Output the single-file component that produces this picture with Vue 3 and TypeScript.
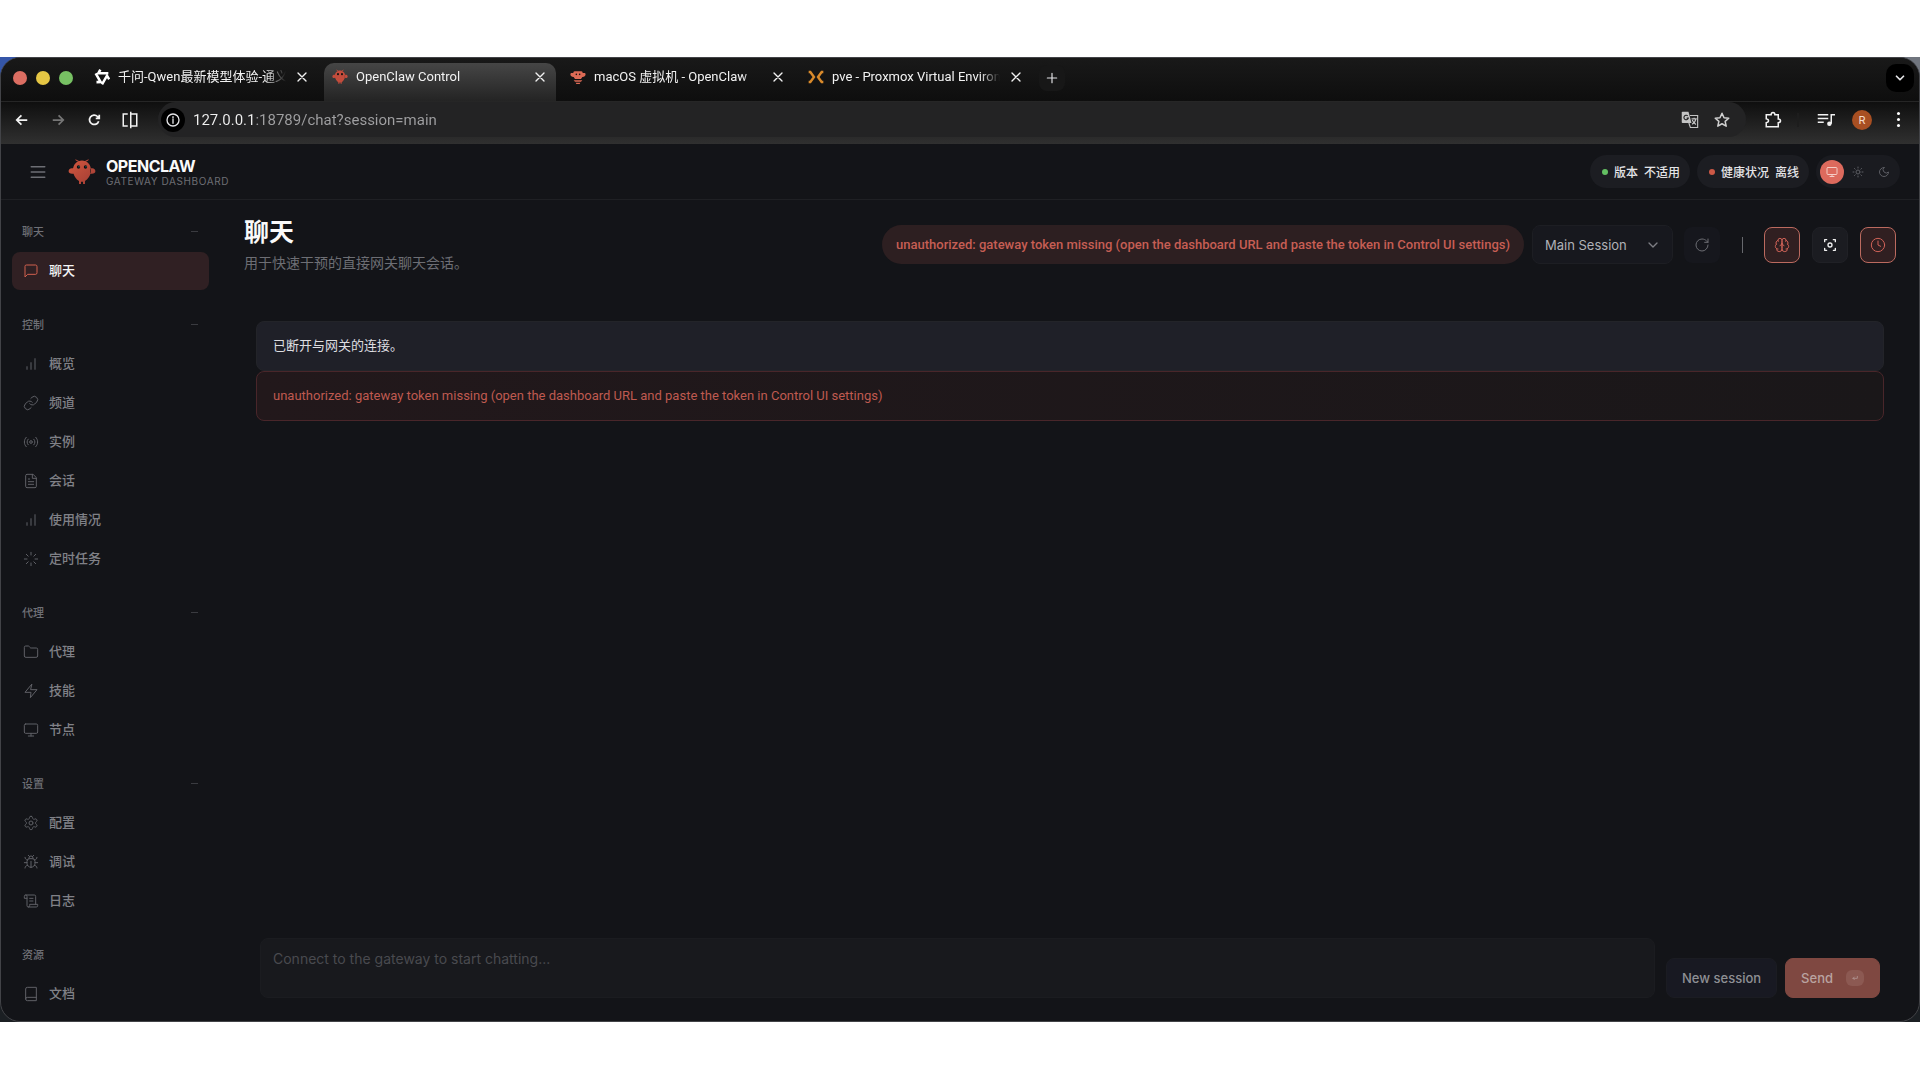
<script setup lang="ts">
import { ref } from 'vue'

interface NavItem {
  label: string
  icon: string
  active?: boolean
}
interface NavGroup {
  title: string
  collapsible: boolean
  items: NavItem[]
}

const icons: Record<string, string> = {
  message: 'M21 15a2 2 0 0 1-2 2H7l-4 4V5a2 2 0 0 1 2-2h14a2 2 0 0 1 2 2z',
  bars: 'M12 20V10M18 20V4M6 20v-4',
  link: 'M10 13a5 5 0 0 0 7.54.54l3-3a5 5 0 0 0-7.07-7.07l-1.72 1.71M14 11a5 5 0 0 0-7.54-.54l-3 3a5 5 0 0 0 7.07 7.07l1.71-1.71',
  radio:
    'M4.9 19.1C1 15.2 1 8.8 4.9 4.9M7.8 16.2c-2.3-2.3-2.3-6.1 0-8.5M14 12a2 2 0 1 1-4 0a2 2 0 1 1 4 0M16.2 7.8c2.3 2.3 2.3 6.1 0 8.5M19.1 4.9C23 8.8 23 15.1 19.1 19',
  file: 'M14.5 2H6a2 2 0 0 0-2 2v16a2 2 0 0 0 2 2h12a2 2 0 0 0 2-2V7.5zM14 2v6h6M16 13H8M16 17H8M10 9H8',
  loader:
    'M12 2v4M12 18v4M4.93 4.93l2.83 2.83M16.24 16.24l2.83 2.83M2 12h4M18 12h4M4.93 19.07l2.83-2.83M16.24 7.76l2.83-2.83',
  folder:
    'M20 20a2 2 0 0 0 2-2V8a2 2 0 0 0-2-2h-7.9a2 2 0 0 1-1.69-.9L9.6 3.9A2 2 0 0 0 7.93 3H4a2 2 0 0 0-2 2v13a2 2 0 0 0 2 2z',
  zap: 'M13 2L3 14h9l-1 8l10-12h-9z',
  monitor: 'M4 3h16a2 2 0 0 1 2 2v10a2 2 0 0 1-2 2H4a2 2 0 0 1-2-2V5a2 2 0 0 1 2-2zM8 21h8M12 17v4',
  settings:
    'M12.22 2h-.44a2 2 0 0 0-2 2v.18a2 2 0 0 1-1 1.73l-.43.25a2 2 0 0 1-2 0l-.15-.08a2 2 0 0 0-2.73.73l-.22.38a2 2 0 0 0 .73 2.73l.15.1a2 2 0 0 1 1 1.72v.51a2 2 0 0 1-1 1.74l-.15.09a2 2 0 0 0-.73 2.73l.22.38a2 2 0 0 0 2.73.73l.15-.08a2 2 0 0 1 2 0l.43.25a2 2 0 0 1 1 1.73V20a2 2 0 0 0 2 2h.44a2 2 0 0 0 2-2v-.18a2 2 0 0 1 1-1.73l.43-.25a2 2 0 0 1 2 0l.15.08a2 2 0 0 0 2.73-.73l.22-.39a2 2 0 0 0-.73-2.73l-.15-.08a2 2 0 0 1-1-1.74v-.5a2 2 0 0 1 1-1.74l.15-.09a2 2 0 0 0 .73-2.73l-.22-.38a2 2 0 0 0-2.73-.73l-.15.08a2 2 0 0 1-2 0l-.43-.25a2 2 0 0 1-1-1.73V4a2 2 0 0 0-2-2zM15 12a3 3 0 1 1-6 0a3 3 0 1 1 6 0',
  bug: 'M8 2l1.88 1.88M14.12 3.88L16 2M9 7.13v-1a3.003 3.003 0 1 1 6 0v1M12 20c-3.3 0-6-2.7-6-6v-3a4 4 0 0 1 4-4h4a4 4 0 0 1 4 4v3c0 3.3-2.7 6-6 6M12 20v-9M6.53 9C4.6 8.8 3 7.1 3 5M6 13H2M3 21c0-2.1 1.7-3.9 3.8-4M20.97 5c0 2.1-1.6 3.8-3.5 4M22 13h-4M17.2 17c2.1.1 3.8 1.9 3.8 4',
  scroll:
    'M8 21h12a2 2 0 0 0 2-2v-2H10v2a2 2 0 1 1-4 0V5a2 2 0 1 0-4 0v3h4M19 17V5a2 2 0 0 0-2-2H4M15 8h-5M15 12h-5',
  book: 'M4 19.5v-15A2.5 2.5 0 0 1 6.5 2H20v20H6.5a2.5 2.5 0 0 1 0-5H20',
  menu: 'M3 12h18M3 5h18M3 19h18',
  sun: 'M16 12a4 4 0 1 1-8 0a4 4 0 1 1 8 0M12 2v2M12 20v2M4.93 4.93l1.41 1.41M17.66 17.66l1.41 1.41M2 12h2M20 12h2M6.34 17.66l-1.41 1.41M19.07 4.93l-1.41 1.41',
  moon: 'M12 3a6 6 0 0 0 9 9a9 9 0 1 1-9-9z',
  refresh: 'M21 12a9 9 0 1 1-9-9c2.52 0 4.93 1 6.74 2.74L21 8M21 3v5h-5',
  brain:
    'M12 5a3 3 0 1 0-5.997.125a4 4 0 0 0-2.526 5.77a4 4 0 0 0 .556 6.588A4 4 0 1 0 12 18zM12 5a3 3 0 1 1 5.997.125a4 4 0 0 1 2.526 5.77a4 4 0 0 1-.556 6.588A4 4 0 1 1 12 18zM15 13a4.5 4.5 0 0 1-3-4a4.5 4.5 0 0 1-3 4M17.6 6.5a3 3 0 0 0 .4-1.375M6 5.125a3 3 0 0 0 .4 1.375M3.48 10.9a4 4 0 0 1 .58-.4M19.94 10.5a4 4 0 0 1 .58.4M6 18a4 4 0 0 1-1.97-.52M19.97 17.48A4 4 0 0 1 18 18',
  focus: 'M4 7V4h3M17 4h3v3M20 17v3h-3M7 20H4v-3M15 12a3 3 0 1 1-6 0a3 3 0 1 1 6 0',
  clock: 'M22 12a10 10 0 1 1-20 0a10 10 0 1 1 20 0M12 6v6l4 2',
  close: 'M6 6l12 12M18 6L6 18',
  plus: 'M12 4v16M4 12h16',
  down: 'M6 9l6 6l6-6',
  enter: 'M19 7v6H6M10 9l-4 4l4 4',
  back: 'M21 12H4M11 4l-8 8l8 8',
  forward: 'M3 12h17M13 4l8 8l-8 8',
  crab: 'M14 1.500C9 1.500 5 5.500 5 11C5 16.500 8.500 20.500 11 22v3h2v-2.300h2V25h2v-3C19.500 20.500 23 16.500 23 11C23 5.500 19 1.500 14 1.500zM5.500 9.500C3 8.500 .8 9.800 .6 12C.5 14.200 3 15.300 5.800 14.500zM22.500 9.500C25 8.500 27.200 9.800 27.400 12C27.500 14.200 25 15.300 22.200 14.500z',
}

const groups: NavGroup[] = [
  { title: '聊天', collapsible: true, items: [{ label: '聊天', icon: 'message', active: true }] },
  {
    title: '控制',
    collapsible: true,
    items: [
      { label: '概览', icon: 'bars' },
      { label: '频道', icon: 'link' },
      { label: '实例', icon: 'radio' },
      { label: '会话', icon: 'file' },
      { label: '使用情况', icon: 'bars' },
      { label: '定时任务', icon: 'loader' },
    ],
  },
  {
    title: '代理',
    collapsible: true,
    items: [
      { label: '代理', icon: 'folder' },
      { label: '技能', icon: 'zap' },
      { label: '节点', icon: 'monitor' },
    ],
  },
  {
    title: '设置',
    collapsible: true,
    items: [
      { label: '配置', icon: 'settings' },
      { label: '调试', icon: 'bug' },
      { label: '日志', icon: 'scroll' },
    ],
  },
  { title: '资源', collapsible: false, items: [{ label: '文档', icon: 'book' }] },
]

const tabs = [
  { title: '千问-Qwen最新模型体验-通义千问', icon: 'qwen', active: false },
  { title: 'OpenClaw Control', icon: 'claw', active: true },
  { title: 'macOS 虚拟机 - OpenClaw', icon: 'docs', active: false },
  { title: 'pve - Proxmox Virtual Environment', icon: 'pve', active: false },
]

const themes = [
  { value: 'system', label: 'System theme', icon: 'monitor' },
  { value: 'light', label: 'Light theme', icon: 'sun' },
  { value: 'dark', label: 'Dark theme', icon: 'moon' },
]

const theme = ref('system')
const session = ref('main')
const draft = ref('')
const url = ref('127.0.0.1:18789/chat?session=main')
const errorText =
  'unauthorized: gateway token missing (open the dashboard URL and paste the token in Control UI settings)'
</script>

<template>
  <div class="desktop">
    <div class="backdrop">
      <div class="window">
        <header class="tabstrip">
          <div class="lights">
            <button class="light red" aria-label="Close window"></button>
            <button class="light yellow" aria-label="Minimize window"></button>
            <button class="light green" aria-label="Zoom window"></button>
          </div>
          <div class="tabs">
            <div v-for="tab in tabs" :key="tab.icon" class="tab" :class="{ active: tab.active }">
              <svg v-if="tab.icon === 'qwen'" class="favicon" viewBox="0 0 24 24">
                <g fill="none" stroke="#fff" stroke-width="3.800">
                  <path d="M9.500 1L6.500 6.500H21.500" />
                  <path d="M9.500 1L6.500 6.500H21.500" transform="rotate(120 12 12)" />
                  <path d="M9.500 1L6.500 6.500H21.500" transform="rotate(240 12 12)" />
                </g>
              </svg>
              <svg v-else-if="tab.icon === 'claw'" class="favicon" viewBox="0 0 28 26">
                <path fill="#c24c3c" :d="icons.crab" />
                <path d="M8 .8l3 2M20 .8l-3 2" stroke="#c24c3c" stroke-width="1.500" />
                <circle cx="10.500" cy="8" r="1.800" fill="#111" />
                <circle cx="17.500" cy="8" r="1.800" fill="#111" />
              </svg>
              <svg v-else-if="tab.icon === 'docs'" class="favicon" viewBox="0 0 24 24">
                <path
                  fill="#dc6a55"
                  d="M7 3.500h10c1.500 0 2 1.500 2 2.500h3c1.500 0 2 3 .5 4.500c-1 1-2.500 1.500-4 1.500L16.500 15h-9L5.500 12c-1.500 0-3-.5-4-1.500C0 9 .5 6 2 6h3c0-1 .5-2.500 2-2.500zM5.500 17h13l-2 2h-9zM8.500 20.500h7l-1 2h-5z"
                />
                <circle cx="9.500" cy="8" r="1.200" fill="#111" />
                <circle cx="14.500" cy="8" r="1.200" fill="#111" />
              </svg>
              <svg v-else class="favicon" viewBox="0 0 24 24">
                <path
                  d="M1 4.500h2.500L9 12l-5.500 7.500H1M23 4.500h-2.500L15 12l5.500 7.500H23"
                  fill="none"
                  stroke="#d98a2b"
                  stroke-width="3.600"
                />
              </svg>
              <span class="tab-title">{{ tab.title }}</span>
              <button class="tab-close" :aria-label="'Close ' + tab.title">
                <svg class="ico" viewBox="0 0 24 24"><path :d="icons.close" /></svg>
              </button>
            </div>
          </div>
          <button class="new-tab" aria-label="New tab">
            <svg class="ico" viewBox="0 0 24 24"><path :d="icons.plus" /></svg>
          </button>
          <button class="tab-search" aria-label="Search tabs">
            <svg class="ico" viewBox="0 0 24 24"><path :d="icons.down" /></svg>
          </button>
        </header>

        <div class="toolbar">
          <button class="tool" aria-label="Back">
            <svg class="ico" viewBox="0 0 24 24"><path :d="icons.back" /></svg>
          </button>
          <button class="tool dim" aria-label="Forward">
            <svg class="ico" viewBox="0 0 24 24"><path :d="icons.forward" /></svg>
          </button>
          <button class="tool" aria-label="Reload">
            <svg class="ico" viewBox="0 0 24 24"><path d="M20 14a8 8 0 1 1-2-8l3 3M21 3v6h-6" /></svg>
          </button>
          <button class="tool split" aria-label="Split view">
            <svg class="ico" viewBox="0 0 24 24">
              <path d="M9 4H3v16h6M14 4h7v16h-7M13 1v22" />
            </svg>
          </button>
          <div class="omnibox">
            <button class="site-info" aria-label="Site information">
              <svg class="ico" viewBox="0 0 24 24">
                <path d="M21 12a9 9 0 1 1-18 0a9 9 0 1 1 18 0M12 11v6M12 7v2" />
              </svg>
            </button>
            <input v-model="url" class="url" type="text" aria-label="Address" />
            <button class="omni-btn" aria-label="Translate">
              <svg class="translate" viewBox="0 0 24 24">
                <path fill="#c4c4c4" d="M2 1h8l4 15H2a1 1 0 0 1-1-1V2a1 1 0 0 1 1-1z" />
                <path
                  d="M9 6.500a3 3 0 1 0 .8 3H7.500"
                  fill="none"
                  stroke="#222"
                  stroke-width="1.500"
                />
                <path
                  d="M12 6h10.200v16H12.500l-2-6M14 10.500h7M17.500 9v1.500M19.800 10.500c-.5 3-3 6-5 7M15 12c1 2.500 3 5 5 6"
                  fill="none"
                  stroke="#c4c4c4"
                  stroke-width="1.500"
                />
              </svg>
            </button>
            <button class="omni-btn" aria-label="Bookmark">
              <svg class="ico" viewBox="0 0 24 24">
                <path d="M12 3l2.700 6l6.300.6l-4.800 4.300l1.400 6.400L12 17l-5.600 3.300l1.400-6.400L3 9.600l6.300-.6z" />
              </svg>
            </button>
          </div>
          <div class="browser-actions">
            <button class="tool" aria-label="Extensions">
              <svg class="ico puzzle" viewBox="0 0 24 24">
                <path d="M3 5h6.500c0-4 5-4 5 0H19v5.500c4 0 4 5 0 5V21H3v-5.500c4-.5 4-4.500 0-5z" />
              </svg>
            </button>
            <span class="tool-sep"></span>
            <button class="tool" aria-label="Media controls">
              <svg class="ico media" viewBox="0 0 24 24">
                <path d="M1 5h14M1 10h14M1 15h8M19 17V5h5" />
                <circle cx="16.500" cy="17" r="2" fill="currentColor" />
              </svg>
            </button>
            <button class="avatar" aria-label="Profile">R</button>
            <button class="dots" aria-label="Browser menu"><i></i><i></i><i></i></button>
          </div>
        </div>

        <div class="topbar">
          <button class="hamburger" aria-label="Toggle navigation">
            <svg class="ico" viewBox="0 0 24 24"><path :d="icons.menu" /></svg>
          </button>
          <svg class="logo" viewBox="0 0 28 26">
            <defs>
              <linearGradient id="claw-body" x1="0" y1="0" x2="1" y2="1">
                <stop offset="0" stop-color="#d2583f" />
                <stop offset="1" stop-color="#a03c34" />
              </linearGradient>
            </defs>
            <path fill="url(#claw-body)" :d="icons.crab" />
            <path d="M7.500 .8l3.500 1.700M20.500 .8l-3.500 1.700" fill="none" stroke="#c24c3c" stroke-width="1" />
            <circle cx="10.500" cy="8" r="1.700" fill="#0c0d10" />
            <circle cx="17.500" cy="8" r="1.700" fill="#0c0d10" />
            <circle cx="11" cy="7.700" r=".5" fill="#4fb9ac" />
            <circle cx="18" cy="7.700" r=".5" fill="#4fb9ac" />
          </svg>
          <div class="brand">
            <strong class="brand-name">OPENCLAW</strong>
            <span class="brand-sub">GATEWAY DASHBOARD</span>
          </div>
          <div class="status">
            <div class="pill"><i class="dot ok"></i><span>版本</span><span>不适用</span></div>
            <div class="pill"><i class="dot bad"></i><span>健康状况</span><span>离线</span></div>
            <div class="themes" role="radiogroup" aria-label="Theme">
              <label v-for="t in themes" :key="t.value" class="theme" :class="{ on: theme === t.value }">
                <input v-model="theme" type="radio" name="theme" :value="t.value" :aria-label="t.label" />
                <svg class="ico" viewBox="0 0 24 24"><path :d="icons[t.icon]" /></svg>
              </label>
            </div>
          </div>
        </div>

        <div class="body">
          <nav class="sidebar">
            <section v-for="g in groups" :key="g.title" class="group">
              <button class="group-head">
                <span>{{ g.title }}</span>
                <i v-if="g.collapsible" class="minus"></i>
              </button>
              <div class="group-items">
                <a v-for="n in g.items" :key="n.label" href="#" class="item" :class="{ active: n.active }">
                  <svg class="ico" viewBox="0 0 24 24"><path :d="icons[n.icon]" /></svg>
                  <span class="item-label">{{ n.label }}</span>
                </a>
              </div>
            </section>
          </nav>

          <main class="main">
            <div class="page-head">
              <div class="page-title">
                <h1>聊天</h1>
                <p>用于快速干预的直接网关聊天会话。</p>
              </div>
              <div class="controls">
                <div class="error-pill">{{ errorText }}</div>
                <div class="select-wrap">
                  <select v-model="session" class="session" aria-label="Session">
                    <option value="main">Main Session</option>
                  </select>
                  <svg class="ico" viewBox="0 0 24 24"><path :d="icons.down" /></svg>
                </div>
                <div class="icon-row">
                  <button class="icon-btn faint" aria-label="Refresh">
                    <svg class="ico" viewBox="0 0 24 24"><path :d="icons.refresh" /></svg>
                  </button>
                  <span class="bar"></span>
                  <button class="icon-btn on" aria-label="Toggle thinking" aria-pressed="true">
                    <svg class="ico" viewBox="0 0 24 24"><path :d="icons.brain" /></svg>
                  </button>
                  <button class="icon-btn bright" aria-label="Focus mode" aria-pressed="false">
                    <svg class="ico" viewBox="0 0 24 24"><path :d="icons.focus" /></svg>
                  </button>
                  <button class="icon-btn on" aria-label="Cron sessions" aria-pressed="true">
                    <svg class="ico" viewBox="0 0 24 24"><path :d="icons.clock" /></svg>
                  </button>
                </div>
              </div>
            </div>

            <div class="thread">
              <div class="callout">已断开与网关的连接。</div>
              <div class="callout danger">{{ errorText }}</div>
            </div>

            <div class="composer">
              <textarea
                v-model="draft"
                aria-label="Message"
                placeholder="Connect to the gateway to start chatting..."
              ></textarea>
              <button class="btn">New session</button>
              <button class="btn send">
                Send
                <kbd><svg class="ico" viewBox="0 0 24 24"><path :d="icons.enter" /></svg></kbd>
              </button>
            </div>
          </main>
        </div>
      </div>
    </div>
  </div>
</template>

<style>
body {
  margin: 0;
  background: #fff;
}
</style>

<style scoped>
* {
  box-sizing: border-box;
}
.desktop {
  display: flex;
  flex-direction: column;
  min-height: 100vh;
  padding: 57px 0 58px;
  font-family: Inter, 'Noto Sans CJK SC', sans-serif;
  font-size: 13px;
  color: #e4e4e7;
}
button,
input,
select,
textarea {
  font: inherit;
  color: inherit;
  border: 0;
  padding: 0;
  margin: 0;
  background: none;
}
.ico {
  display: block;
  width: 16px;
  height: 16px;
  flex: none;
  fill: none;
  stroke: currentColor;
  stroke-width: 2;
  stroke-linecap: round;
  stroke-linejoin: round;
}
.backdrop {
  flex: 1;
  display: flex;
  background: linear-gradient(90deg, #3556a8 0 50%, #70757e 50%) top / 100% 50% no-repeat, #1b1f23;
}
.window {
  flex: 1;
  min-width: 0;
  display: flex;
  flex-direction: column;
  overflow: hidden;
  border: 1px solid #424347;
  border-radius: 20px;
  background: #131418;
}

/* Browser chrome */
.tabstrip {
  display: flex;
  align-items: center;
  height: 44px;
  padding: 0 5px 4px 12px;
  background: linear-gradient(#191919, #0e0e0e);
  border-bottom: 1px solid #262626;
}
.lights {
  display: flex;
  gap: 9px;
  margin-right: 13px;
}
.light {
  width: 14px;
  height: 14px;
  border-radius: 50%;
}
.red {
  background: #dc6e62;
}
.yellow {
  background: #e5c644;
}
.green {
  background: #77c163;
}
.tabs {
  display: flex;
  gap: 6px;
  align-self: flex-end;
  margin-bottom: -4px;
}
.tab {
  display: flex;
  align-items: center;
  gap: 8px;
  width: 232px;
  height: 38px;
  padding: 0 8px 11px;
  border-radius: 10px 10px 0 0;
  color: #f2f2f2;
}
.tab.active {
  background: linear-gradient(#464646, #242424);
}
.favicon {
  width: 16px;
  height: 16px;
  flex: none;
}
.tab-title {
  flex: 1;
  min-width: 0;
  overflow: hidden;
  white-space: nowrap;
  font-family: Roboto, 'Noto Sans CJK SC', sans-serif;
  line-height: 20px;
  mask-image: linear-gradient(90deg, #000 88%, transparent);
}
.tab-close {
  width: 16px;
  height: 16px;
}
.new-tab {
  display: grid;
  place-items: center;
  width: 26px;
  height: 26px;
  margin-left: 7px;
  border-radius: 8px;
  background: #171717;
}
.new-tab .ico {
  width: 14px;
  height: 14px;
}
.tab-search {
  display: grid;
  place-items: center;
  width: 28px;
  height: 28px;
  margin-left: auto;
  border-radius: 10px;
  background: #000;
}
.tab-search .ico {
  width: 14px;
  height: 14px;
  stroke-width: 3;
}
.toolbar {
  display: flex;
  align-items: flex-start;
  height: 42px;
  padding: 0 8px 0 11px;
  background: linear-gradient(#0f0f0f, #303030);
}
.tool {
  display: grid;
  place-items: center;
  width: 20px;
  height: 35px;
  margin-right: 16px;
  color: #f2f2f2;
}
.tool .ico {
  width: 14px;
  height: 14px;
  stroke-width: 3;
  stroke-linecap: butt;
  stroke-linejoin: miter;
}
.tool.dim {
  color: #757575;
}
.tool.split {
  margin-right: 18px;
}
.tool.split .ico {
  width: 18px;
  height: 18px;
  stroke-width: 2;
}
.omnibox {
  flex: 1;
  display: flex;
  align-items: center;
  height: 35px;
  padding: 0 14px 0 3px;
  border-radius: 18px;
  background: #232324;
}
.site-info {
  display: grid;
  place-items: center;
  width: 24px;
  height: 24px;
  margin-right: 8px;
  border-radius: 50%;
  background: #000;
}
.url {
  flex: 1;
  min-width: 0;
  height: 24px;
  font-family: Roboto, sans-serif;
  font-size: 15px;
  outline: none;
  background: linear-gradient(90deg, #f0f0f0 0 62px, #a0a0a2 62px);
  background-clip: text;
  -webkit-text-fill-color: transparent;
}
.omni-btn {
  display: grid;
  place-items: center;
  width: 20px;
  height: 24px;
  margin-left: 12px;
  color: #d0d0d0;
}
.translate {
  width: 18px;
  height: 18px;
}
.omni-btn .ico {
  width: 18px;
  height: 18px;
}
.browser-actions {
  display: flex;
  align-items: center;
  height: 35px;
  margin-left: 17px;
}
.browser-actions .tool {
  margin-right: 14px;
}
.tool .ico.puzzle,
.tool .ico.media {
  width: 18px;
  height: 18px;
  stroke-width: 2;
}
.tool-sep {
  width: 2px;
  height: 14px;
  margin-right: 17px;
  background: #1d1d1d;
}
.avatar {
  width: 20px;
  height: 20px;
  margin-left: 2px;
  margin-right: 24px;
  border-radius: 50%;
  background: #a84f22;
  color: #f5dccb;
  font-size: 11px;
  line-height: 20px;
}
.dots {
  display: flex;
  flex-direction: column;
  align-items: center;
  gap: 3px;
  width: 4px;
  margin-right: 11px;
}
.dots i {
  width: 3px;
  height: 3px;
  border-radius: 50%;
  background: #fff;
}

/* Dashboard top bar */
.topbar {
  display: flex;
  align-items: center;
  height: 56px;
  padding: 0 19px 0 28px;
  border-bottom: 1px solid #1f2024;
}
.hamburger {
  margin-right: 21px;
  color: #6d6e74;
}
.hamburger .ico {
  width: 18px;
  height: 18px;
  stroke-width: 2;
}
.logo {
  width: 28px;
  height: 26px;
  margin-right: 10px;
}
.brand {
  display: flex;
  flex-direction: column;
}
.brand-name {
  font-size: 16px;
  line-height: 18px;
  font-weight: 700;
  letter-spacing: -0.03em;
  color: #fafafa;
}
.brand-sub {
  font-size: 10px;
  line-height: 12px;
  letter-spacing: 0.06em;
  color: #6d6e74;
}
.status {
  display: flex;
  align-items: center;
  gap: 7px;
  margin-left: auto;
}
.pill {
  display: flex;
  align-items: center;
  gap: 6px;
  height: 33px;
  padding: 0 10px 0 12px;
  border-radius: 17px;
  background: #1c1d22;
  font-size: 12px;
  font-weight: 500;
}
.dot {
  width: 6px;
  height: 6px;
  border-radius: 50%;
}
.dot.ok {
  background: #63bf62;
}
.dot.bad {
  background: #cc5846;
}
.themes {
  display: flex;
  align-items: center;
  gap: 2px;
  height: 33px;
  padding: 0 4px;
  border-radius: 17px;
  background: #1a1b20;
}
.theme {
  position: relative;
  display: grid;
  place-items: center;
  width: 24px;
  height: 24px;
  border-radius: 50%;
  color: #5d5e64;
}
.theme input {
  position: absolute;
  inset: 0;
  width: 100%;
  height: 100%;
  opacity: 0;
}
.theme .ico {
  width: 12px;
  height: 12px;
  stroke-width: 2;
}
.theme.on {
  background: #dd6a5d;
  color: #f5cdc6;
}

/* Sidebar */
.body {
  flex: 1;
  display: flex;
  min-height: 0;
}
.sidebar {
  display: flex;
  flex-direction: column;
  gap: 21px;
  width: 220px;
  padding: 18px 12px 0 11px;
  font-family: 'Noto Sans CJK SC', sans-serif;
}
.group {
  display: flex;
  flex-direction: column;
  gap: 8px;
}
.group-head {
  display: flex;
  align-items: center;
  justify-content: space-between;
  height: 26px;
  padding: 0 11px 0 10px;
  font-size: 11px;
  font-weight: 500;
  color: #6f7076;
}
.minus {
  width: 7px;
  height: 1px;
  background: #3a3b40;
}
.group-items {
  display: flex;
  flex-direction: column;
  gap: 1px;
}
.item {
  display: flex;
  align-items: center;
  gap: 10px;
  height: 38px;
  padding: 0 11px;
  border-radius: 8px;
  font-weight: 500;
  color: #808187;
  text-decoration: none;
}
.item-label {
  padding-bottom: 3px;
}
.item .ico {
  stroke-width: 1.5;
  color: #5f6066;
}
.item.active {
  background: #302023;
  color: #f4f4f5;
}
.item.active .ico {
  color: #d0604f;
}

/* Chat page */
.main {
  flex: 1;
  min-width: 0;
  display: flex;
  flex-direction: column;
  padding: 16px 23px 23px;
}
.page-head {
  display: flex;
  align-items: flex-start;
  justify-content: space-between;
}
h1 {
  margin: 0;
  font-size: 25px;
  line-height: 32px;
  font-weight: 700;
  color: #fafafa;
}
.page-title p {
  margin: 5px 0 0;
  font-size: 14px;
  line-height: 20px;
  color: #6d6e74;
}
.controls {
  display: flex;
  align-items: center;
  gap: 8px;
  padding-top: 9px;
}
.error-pill {
  height: 39px;
  padding: 0 14px;
  border-radius: 20px;
  background: #2d1f21;
  font-family: Roboto, sans-serif;
  line-height: 39px;
  font-weight: 500;
  color: #c65e54;
  white-space: nowrap;
}
.select-wrap {
  position: relative;
  display: flex;
  align-items: center;
}
.session {
  appearance: none;
  width: 141px;
  height: 39px;
  padding: 0 32px 0 12px;
  border: 1px solid #1d1e23;
  border-radius: 8px;
  background: #17181e;
  color: #b0b1b6;
}
.select-wrap .ico {
  position: absolute;
  right: 12px;
  color: #7d7e84;
  pointer-events: none;
}
.icon-row {
  display: flex;
  align-items: center;
  gap: 12px;
  padding-left: 3px;
}
.icon-btn {
  display: grid;
  place-items: center;
  width: 36px;
  height: 36px;
  border: 1px solid transparent;
  border-radius: 8px;
}
.icon-btn .ico {
  stroke-width: 1.5;
}
.icon-btn.faint {
  background: #16171d;
  color: #6c6d73;
}
.icon-btn.bright {
  background: #1b1c21;
  border-color: #202126;
  color: #f0f0f0;
}
.icon-btn.bright .ico {
  stroke-width: 2;
}
.icon-btn.on {
  background: #301f21;
  border-color: #bb6a5f;
  color: #cf6358;
}
.bar {
  width: 1px;
  height: 16px;
  margin: 0 9px 0 10px;
  background: #67686d;
}
.thread {
  flex: 1;
  padding: 48px 12px 0;
}
.callout {
  height: 50px;
  padding: 0 16px;
  border: 1px solid #232429;
  border-radius: 8px;
  background: #1f2028;
  font-family: Roboto, 'Noto Sans CJK SC', sans-serif;
  line-height: 48px;
  color: #dedee1;
}
.callout.danger {
  border-color: #49262a;
  background: linear-gradient(90deg, #22181b, #1a1719);
  color: #bf5a50;
}
.composer {
  display: flex;
  align-items: flex-end;
  gap: 8px;
  padding: 0 16px;
}
textarea {
  flex: 1;
  min-width: 0;
  height: 60px;
  margin-right: 3px;
  padding: 9px 12px;
  border: 1px solid #1b1c20;
  border-radius: 8px;
  background: #18191d;
  font-size: 14px;
  line-height: 21px;
  resize: none;
}
textarea::placeholder {
  color: #494a4f;
}
.btn {
  display: flex;
  align-items: center;
  justify-content: center;
  gap: 13px;
  height: 40px;
  padding: 0 15px;
  border: 1px solid #1b1c22;
  border-radius: 8px;
  background: #181922;
  font-weight: 500;
  color: #8e8f94;
}
.btn.send {
  border-color: #7f4841;
  background: #7f4841;
  color: #b9a3a0;
}
kbd {
  display: grid;
  place-items: center;
  width: 18px;
  height: 16px;
  border-radius: 6px;
  background: #8c5952;
}
kbd .ico {
  width: 8px;
  height: 8px;
}
</style>
